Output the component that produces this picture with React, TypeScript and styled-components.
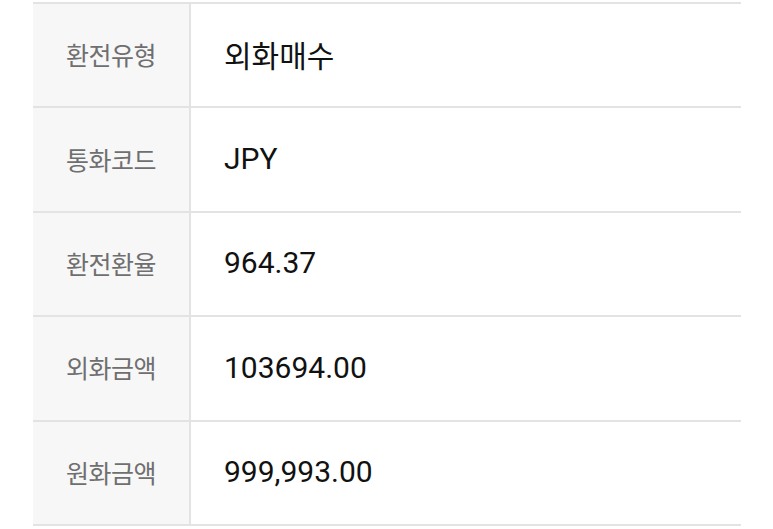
import styled, { createGlobalStyle } from "styled-components";

const ROWS = [
  { label: "환전유형", value: "외화매수" },
  { label: "통화코드", value: "JPY" },
  { label: "환전환율", value: "964.37" },
  { label: "외화금액", value: "103694.00" },
  { label: "원화금액", value: "999,993.00" },
];

const GlobalStyle = createGlobalStyle`
  body {
    margin: 0;
    background: #ffffff;
    font-family: Roboto, "Noto Sans CJK KR", sans-serif;
  }
`;

function App(): JSX.Element {
  return (
    <>
      <GlobalStyle />
      <Page>
        <Table>
          {ROWS.map((row) => (
            <Row key={row.label}>
              <Label>{row.label}</Label>
              <Value>{row.value}</Value>
            </Row>
          ))}
        </Table>
      </Page>
    </>
  );
}

export default App;

const Page = styled.div`
  padding: 2px 32px 0 33px;
`;

const Table = styled.div`
  width: 708px;
  border-top: 2px solid #e3e3e3;
`;

const Row = styled.div`
  display: grid;
  grid-template-columns: 158px 1fr;
  height: 104.4px;
  box-sizing: border-box;
  border-bottom: 2px solid #e3e3e3;
`;

const Label = styled.div`
  display: flex;
  align-items: center;
  justify-content: center;
  background: #f7f7f7;
  border-right: 2px solid #e3e3e3;
  color: #6f6f6f;
  font-family: "Noto Sans CJK KR", sans-serif;
  font-size: 25px;
  letter-spacing: -0.5px;
  padding-bottom: 2px;
`;

const Value = styled.div`
  display: flex;
  align-items: center;
  padding-left: 33px;
  padding-bottom: 2px;
  color: #111111;
  font-family: Roboto, "Noto Sans CJK KR", sans-serif;
  font-size: 30px;
`;
